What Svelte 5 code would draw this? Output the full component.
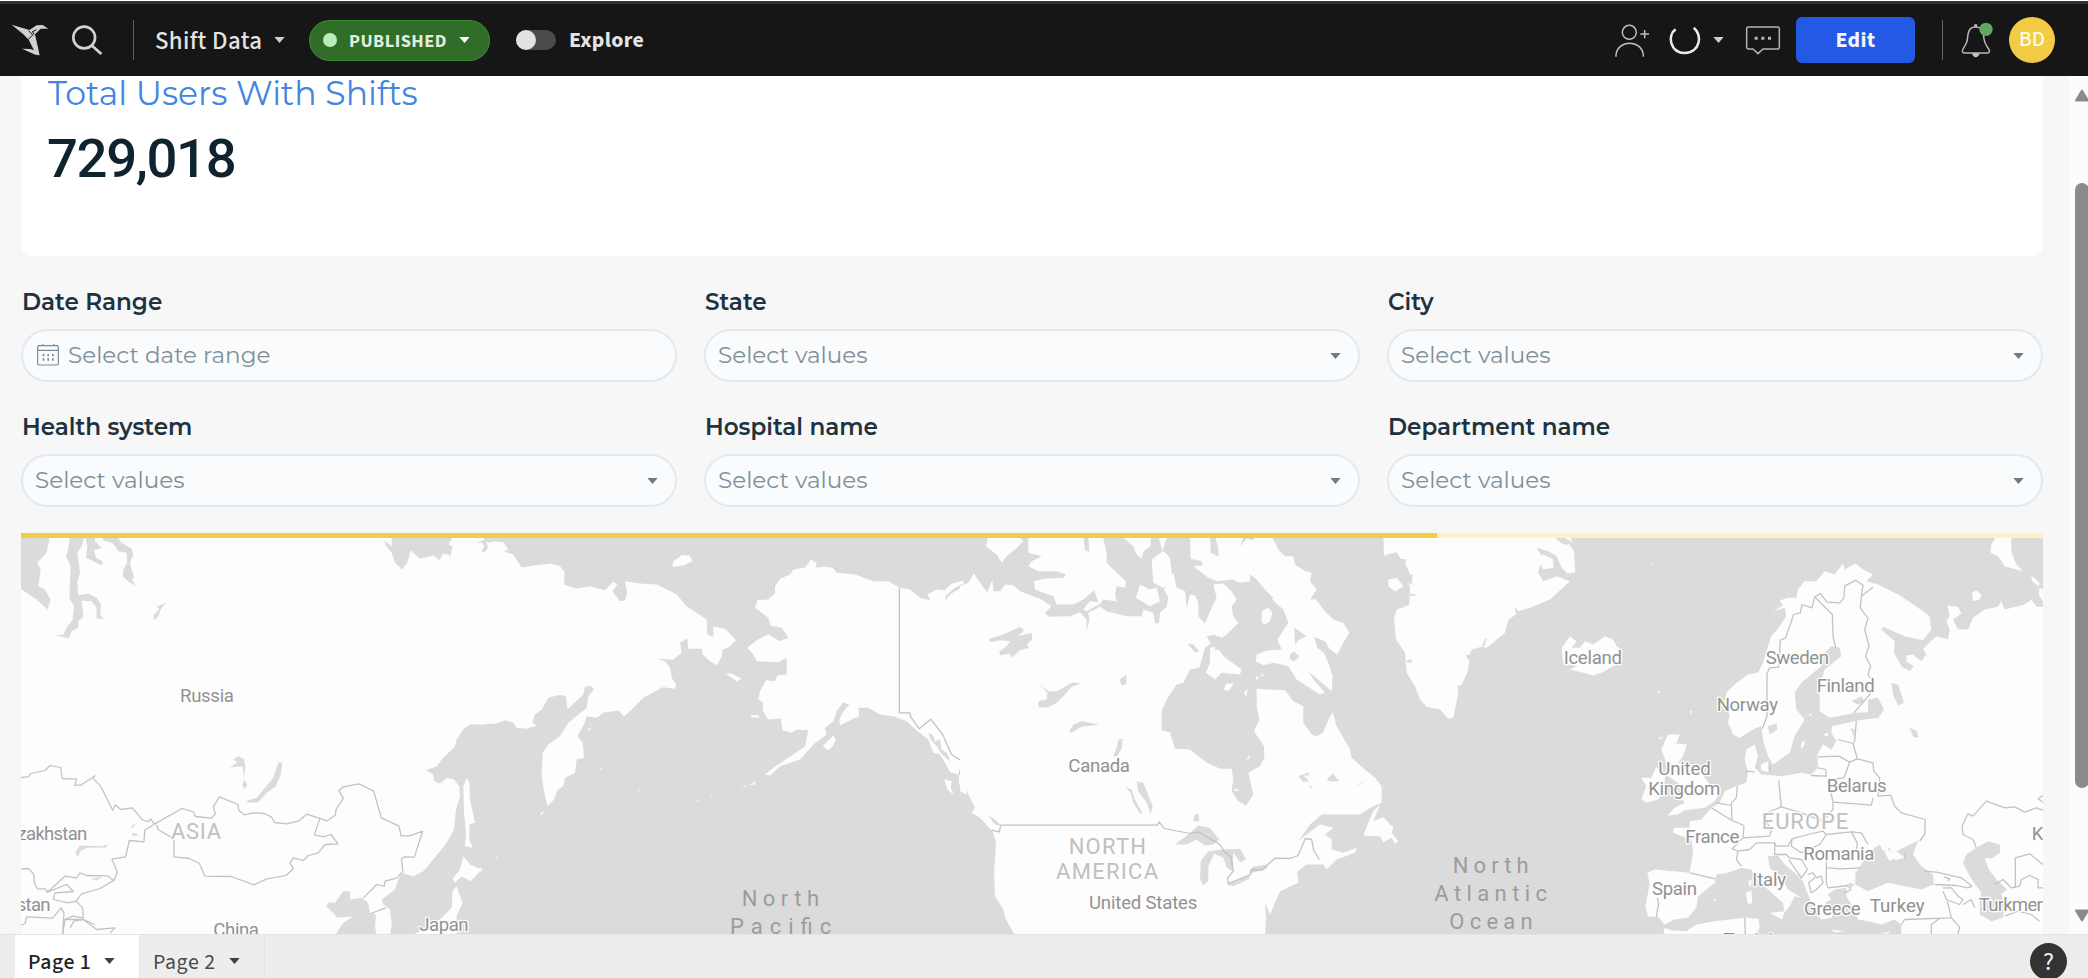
<script>
  const filters = [
    { label: 'Date Range', placeholder: 'Select date range', date: true },
    { label: 'State', placeholder: 'Select values' },
    { label: 'City', placeholder: 'Select values' },
    { label: 'Health system', placeholder: 'Select values' },
    { label: 'Hospital name', placeholder: 'Select values' },
    { label: 'Department name', placeholder: 'Select values' },
  ];

  // Each tile: x offset, then layers painted in order.
  const tiles = [
    {
      x: 0,
      land: ['62,50 1452,50 1452,1250 62,1250'],
      sea: [
        '62,50 150,50 140,100 112,130 122,150 115,200 135,210 152,240 142,270 110,240 62,208',
        '210,50 255,50 245,80 232,100 240,160 232,190 235,228 265,222 290,235 303,255 300,285 312,298 290,298 290,265 275,245 245,243 250,290 235,305 235,325 215,335 207,356 165,348 190,345 200,325 218,300 222,260 208,235 210,190 212,140 198,110 205,85',
        '255,50 285,50 285,65 305,85 282,92 288,115 308,125 305,138 280,125 258,115 262,80',
        '305,50 350,50 365,70 395,88 400,105 390,130 402,175 395,180 408,198 390,190 368,170 370,150 382,130 380,100 355,95 340,72 310,62',
        '498,250 470,262 478,270 462,285 460,303 475,290 482,270',
        '1150,62 1175,80 1175,50 1360,50 1345,75 1357,80 1352,108 1330,102 1318,122 1300,108 1260,118 1232,92 1222,130 1206,150 1185,130 1175,100 1160,82',
        '1432,68 1455,60 1465,80 1455,98 1443,95 1450,78',
        '1452,614 1410,615 1390,630 1370,660 1365,680 1330,715 1310,740 1277,752 1300,765 1302,785 1320,792 1340,775 1362,780 1378,800 1380,830 1368,870 1362,930 1340,970 1300,1020 1270,1055 1240,1070 1205,1060 1195,1080 1185,1110 1145,1140 1150,1155 1170,1170 1175,1210 1170,1250 1452,1250',
        '1003,1250 1030,1210 1060,1190 1010,1195 1000,1180 978,1160 985,1150 1005,1150 1030,1115 1050,1115 1050,1140 1085,1135 1105,1150 1110,1180 1128,1185 1125,1220 1130,1250',
        '835,730 847,730 842,765 828,800 800,820 775,848 742,850 742,843 770,835 795,805 820,775',
        '690,745 712,728 700,720 715,710 732,718 736,745 732,780 742,795 733,810 727,795 733,780 728,742 715,740',
        '225,1000 240,978 300,980 324,976 318,984 260,985 240,995 236,1012',
        '272,1078 308,1072 290,1083',
        '395,940 418,945 400,950', '392,922 413,908 396,926',
      ],
      over: [
        '1400,775 1408,790 1410,840 1425,910 1408,915 1408,960 1418,985 1395,980 1398,940 1392,880 1390,800',
        '1390,1010 1410,1035 1445,1050 1412,1085 1385,1070 1365,1090 1358,1078 1380,1050',
        '1370,1100 1388,1150 1370,1190 1370,1250 1230,1250 1260,1235 1290,1215 1320,1200 1355,1165 1358,1115',
      ],
      lines: [
        '62,774 85,772 92,762 135,753 150,738 182,744 187,777 230,779 224,797 242,797 285,769 278,776 302,800 338,872 346,856 362,870 397,865 428,902 445,906 452,898 463,914 546,867 580,877 587,891 634,896 646,883 640,862 658,832 714,855 716,872 733,886 760,880 793,882 815,893 823,909 858,913 895,905 920,884 982,904 1006,887 1008,870 1030,836 1017,814 1030,802 1077,793 1121,815 1144,895 1197,920 1203,949 1230,949 1268,935 1243,1013 1213,1012 1204,1020 1209,1055 1190,1076 1155,1085 1153,1100 1130,1095 1090,1135',
        '463,914 434,932 432,967 388,963 377,1012 336,1019 352,1058 342,1082 300,1107 245,1123 228,1145 248,1165 250,1195 218,1190 195,1200 188,1245',
        '470,915 474,930 522,958 522,1012 568,1017 598,1032 615,1070 693,1071 762,1096 800,1078 858,1068 880,1048 870,1030 880,1015 910,1023 925,1008 955,1000 975,975 1014,973 993,945 972,952 943,946 960,896',
        '62,1048 85,1047 101,1064 103,1090 112,1108 135,1108 142,1118 195,1070 230,1075 240,1060 260,1068 323,1069 340,1082',
        '142,1118 200,1095 220,1116 165,1120 160,1140 205,1150 228,1145', '62,1218 75,1212 80,1192 158,1196 183,1165 192,1180 188,1245',
        '195,1200 250,1200 290,1230 345,1225 330,1240', '210,1225 222,1205 250,1200 285,1215', '1112,1182 1158,1165',
      ],
    },
    {
      x: 1440,
      land: [
        '0,60 30,70 40,66 70,68 85,90 72,96 100,105 125,145 160,138 215,133 240,140 254,158 252,195 290,208 330,200 375,212 400,187 412,195 397,215 420,245 435,243 442,220 435,185 480,192 530,195 590,225 620,260 680,300 682,345 700,352 700,322 735,328 768,362 745,385 728,390 725,410 712,437 690,425 668,405 665,388 625,388 622,357 600,370 605,400 580,420 533,418 555,425 570,445 575,475 588,495 585,508 548,503 490,535 450,575 432,590 415,573 370,580 350,595 320,590 312,615 292,650 308,670 312,715 290,720 285,760 255,775 250,800 232,812 222,840 203,860 195,830 185,770 188,700 205,675 240,650 265,610 320,565 325,530 342,510 335,500 315,500 310,525 262,570 258,530 240,526 205,535 185,570 165,585 157,610 170,618 140,628 110,625 100,610 75,602 50,612 0,615',
        '577,142 580,125 605,107 628,108 638,125 610,138',
        '992,120 1010,130 1007,145 1035,142 1058,145 1070,160 1125,165 1180,185 1225,185 1260,205 1290,210 1320,235 1352,243 1342,225 1370,210 1395,212 1415,193 1450,183 1450,798 1437,795 1437,765 1410,758 1395,730 1380,705 1360,700 1345,660 1310,632 1280,605 1240,590 1200,585 1165,565 1135,565 1138,590 1115,600 1080,617 1078,600 1090,575 1108,555 1090,548 1070,575 1060,605 1035,625 1040,645 1000,675 960,720 900,740 870,768 855,765 880,745 940,705 975,680 985,632 950,630 935,640 908,633 902,597 865,600 848,572 850,550 835,540 840,515 858,482 885,485 892,468 920,465 920,415 895,428 830,425 820,405 802,385 830,362 865,345 900,365 925,355 905,325 872,318 865,295 825,265 832,242 865,240 885,222 885,200 900,178 930,165 940,150 975,145',
        '1028,680 1060,648 1068,660 1058,680 1045,692', '735,463 755,463 785,478 770,486 755,473', '812,586 838,588 835,595 815,593',
        '785,805 795,797 800,800', '808,797 828,784 825,795', '178,885 192,873 188,884', '320,632 335,624 330,632', '1393,780 1415,785 1412,805 1422,827 1402,810',
        '0,1040 6,1050 2,1062', '650,845 656,838 656,846', '690,830 696,830 694,834', '360,745 365,745 363,755', '474,812 480,812 478,816', '48,1012 53,1012 51,1018',
      ],
      sea: ['1395,230 1425,205 1455,190 1450,200 1410,225 1398,242', '0,65 18,62 24,85 12,98 4,95 14,80', '1345,640 1358,645 1365,665 1380,660 1385,690 1400,700 1412,725 1400,718 1382,700 1370,680 1352,660'],
      over: [],
      lines: ['1258,205 1258,580 1290,580 1292,592 1318,628 1352,599 1388,645 1414,704 1446,725 1438,765'],
    },
    {
      x: 2880,
      land: [
        '0,200 25,190 42,162 60,190 82,218 97,180 100,215 120,215 135,195 160,198 180,215 240,238 275,260 255,280 265,292 330,290 360,278 380,300 380,335 388,300 385,280 420,262 440,275 500,290 545,290 550,270 580,280 585,312 597,310 600,280 620,262 625,235 612,210 640,160 650,205 675,215 680,265 690,225 705,228 715,250 715,290 735,312 750,275 770,235 760,195 790,192 815,215 830,240 815,262 820,290 835,310 800,345 775,362 765,345 740,350 752,372 735,385 718,445 690,450 670,490 650,495 620,540 605,575 605,632 630,638 645,688 690,690 740,730 780,748 815,748 820,780 815,815 835,845 858,858 880,825 872,790 865,760 900,740 913,715 912,680 882,635 898,600 890,560 890,508 920,510 975,512 1000,545 1030,560 1030,610 1055,645 1070,650 1090,638 1108,595 1118,578 1130,620 1150,655 1170,690 1175,715 1215,750 1245,775 1265,800 1265,850 1230,865 1200,885 1085,885 1050,915 1015,965 1040,945 1080,915 1120,925 1095,945 1115,960 1115,990 1150,1000 1190,985 1185,1000 1130,1020 1100,1050 1090,1035 1040,1035 1012,1055 1015,1090 960,1115 945,1150 930,1185 915,1150 918,1200 915,1250 167,1250 135,1195 130,1170 105,1130 102,1060 105,1020 108,965 97,935 60,895 35,880 45,865 25,825 18,803 0,800',
        '205,50 370,50 375,92 388,97 385,50 428,50 440,100 440,130 470,160 498,185 495,205 470,200 465,225 470,245 430,240 418,255 402,212 370,240 340,255 290,255 280,230 225,210 222,185 250,178 310,175 318,165 290,155 235,155 205,140 215,125 245,110 205,100',
        '85,50 175,50 190,65 165,90 140,110 125,130 110,105 78,80', '485,50 572,50 572,80 550,95 545,117 530,105 520,80',
        '575,120 608,95 595,50 622,50 608,92 630,115 635,160 645,190 610,205 580,190', '540,195 570,210 590,205 600,245 570,260 545,245 528,235', '370,270 390,245 425,250 380,275',
        '690,50 750,50 752,100 775,112 775,85 765,50 935,50 955,90 975,110 1000,110 1005,135 1035,155 1055,160 1050,185 1070,210 1050,240 1068,240 1090,270 1120,300 1150,310 1168,340 1150,370 1132,405 1110,390 1095,365 1062,352 1072,385 1092,400 1105,430 1118,470 1115,515 1045,455 1060,480 1095,520 1080,525 1010,480 985,440 940,430 910,437 888,425 890,405 920,393 965,390 952,360 985,310 970,270 930,235 910,205 890,180 870,165 870,185 840,190 815,180 770,185 745,175 700,140 728,138 725,125 692,118',
        '750,385 770,380 790,410 845,450 840,465 785,460 765,480 738,460 750,430', '790,510 800,492 822,492 805,515', '852,520 862,508 860,533',
        '1260,855 1240,905 1270,893 1300,925 1295,940 1315,965 1305,972 1295,955 1270,968 1260,950 1210,948 1225,910 1240,875',
        '0,795 20,805 20,825 0,815',
      ],
      sea: [
        '88,358 130,345 180,322 192,332 175,350 215,340 217,360 200,375 208,385 180,392 155,415 150,402 120,408 118,397 140,380 150,365 120,362 90,368',
        '240,495 265,515 290,515 340,488 362,493 335,502 315,525 290,550 265,563 235,563 235,545 260,540 262,520', '328,635 340,615 365,605 418,616 365,622 335,640',
        '478,480 500,465 498,495 485,497', '460,710 470,685 475,660 488,658 485,685 472,710', '530,785 550,790 578,860 572,883 560,850 535,815',
        '497,803 515,810 525,840 548,882 540,883 520,850 512,820', '700,905 703,887 715,883 718,905', '645,975 685,945 715,918 750,925 778,960 760,975 735,978 710,960 680,975',
        '720,1080 722,1025 745,995 785,990 840,988 858,1020 840,1028 820,1000 818,1055 800,1045 790,1015 762,1003 745,1040 745,1085 730,1097', '800,1095 870,1065 868,1078 820,1100', '868,1055 880,1042 920,1035 920,1048 870,1062',
        '1015,770 1045,758 1048,768 1030,768 1048,785 1030,787', '1100,780 1118,762 1138,785 1110,785', '1193,797 1215,783 1200,796', '1048,795 1057,803 1052,808', '683,373 700,375 718,397 705,399',
        '1003,325 1040,350 1018,360 1005,375', '990,405 1002,395 1018,410 1002,425 990,420', '765,350 780,350 790,375 795,395 765,390', '1140,890 1162,908 1135,905', '840,80 850,55 885,55 880,62 860,58', '868,165 940,235 930,245 890,215', '85,888 105,900 125,920 105,915',
      ],
      over: ['905,310 905,275 925,265 937,280 930,305 915,315', '888,472 895,470 894,480 888,480', '900,465 912,465 905,472', '858,722 870,705 868,718', '822,806 840,812 825,815'],
      lines: ['94,932 118,937 122,917 592,917 598,907 612,927 690,942 715,937 780,975 792,995 813,1012 820,1055 803,1075 805,1092 872,1065 875,1050 905,1052 945,1016 990,1017 1014,1008 1036,957 1055,960 1061,993 1078,1020'],
    },
    {
      x: 4140,
      land: [
        '10,50 520,50 545,72 570,78 578,92 585,158 562,162 545,145 530,110 505,95 470,85 490,105 520,120 520,145 490,150 480,135 474,160 490,185 530,170 570,185 510,240 450,265 415,275 403,260 408,285 385,300 375,340 320,385 312,385 310,380 275,390 270,405 256,408 268,425 262,460 245,495 232,500 235,520 220,595 205,598 180,570 140,562 120,540 105,500 80,460 75,400 48,360 42,300 50,270 75,262 88,255 90,200 75,180 90,165 75,130 45,110 12,108',
        '25,180 50,175 70,200 45,217 25,200', '545,385 570,350 590,365 575,385 600,385 615,365 640,375 675,350 700,360 710,380 728,395 720,430 690,445 675,455 640,468 610,460 570,450 590,440 550,432', '810,138 820,130 815,138', '832,515 840,513 838,522',
      ],
      sea: ['20,105 50,98 62,118 80,120 72,138 45,122 20,125', '35,145 60,148 80,165 98,165 95,195 82,190 60,168 38,165', '90,222 115,226 90,230', '80,422 95,420 95,430 80,430', '470,85 485,90 492,108 482,105', '315,358 320,358 312,382 306,380', '520,50 545,50 575,72 560,70'],
      over: ['548,50 570,50 578,70'],
      lines: [],
    },
    {
      x: 4704,
      land: [
        '515,655 495,645 480,610 485,585 470,555 475,520 500,495 540,465 570,460 585,430 600,380 610,350 635,320 655,290 650,265 615,275 645,258 635,243 660,235 685,235 690,210 710,185 745,185 770,155 800,165 825,132 830,150 862,132 885,150 915,165 895,185 930,195 1000,230 1050,265 1085,290 1090,330 1065,362 1010,350 945,322 940,330 980,365 978,400 1000,440 1025,455 1037,440 1015,425 1015,408 1035,405 1060,425 1075,405 1065,388 1105,350 1140,360 1145,330 1135,305 1145,290 1138,258 1170,262 1180,283 1155,300 1170,330 1200,330 1215,295 1250,270 1290,262 1300,245 1310,270 1370,255 1390,240 1405,262 1425,262 1425,1250 1000,1250 1000,1215 980,1200 940,1215 900,1205 870,1200 860,1170 835,1130 835,1105 800,1110 778,1125 790,1140 770,1150 800,1170 790,1195 760,1200 740,1175 722,1130 705,1085 680,1060 650,1035 630,1008 600,1010 605,1045 640,1075 660,1110 700,1135 680,1130 665,1160 650,1180 645,1150 600,1110 570,1085 550,1050 520,1045 480,1060 445,1065 440,1090 390,1130 385,1165 360,1195 320,1200 290,1215 270,1192 240,1192 232,1160 245,1095 238,1060 260,1050 365,1060 375,1000 370,960 315,940 318,925 365,925 365,905 400,900 430,865 455,850 470,815 505,800 535,790 540,760 530,720 535,690 560,675 570,710 560,745 580,765 640,770 700,760 730,765 750,745 748,705 765,675 790,690 805,665 790,640 792,620 860,605 890,600 930,595 900,578 865,580 785,595 755,575 755,500 770,450 820,410 815,385 790,380 770,400 760,440 700,490 680,520 685,570 710,600 680,650 665,700 615,735 600,710 585,660 580,620 565,625',
        '700,668 712,662 708,680 698,688', '578,735 600,725 602,758 580,752', '300,645 335,645 325,672 357,675 345,710 330,730 395,745 410,775 430,800 460,810 440,845 410,865 350,872 330,885 298,888 320,865 350,850 330,825 345,800 300,770 290,715 280,690',
        '220,775 250,775 265,742 292,770 285,820 270,840 235,850 220,840 235,800', '285,1250 290,1225 310,1232 355,1235 385,1215 440,1205 530,1195 572,1198 575,1225 560,1250', '605,1180 650,1175 642,1200', '533,1120 550,1112 553,1150 540,1155', '540,1085 552,1080 548,1105', '790,1230 830,1236 800,1238', '935,1243 970,1235 960,1243',
        '1285,50 1330,50 1330,95 1345,135 1365,155 1310,140 1290,110 1268,100 1270,75', '1212,220 1225,212 1240,225 1235,240 1215,245', '1390,168 1415,190 1412,200 1392,185', '1415,205 1425,210 1425,245 1412,225', '764,645 782,640 778,650', '365,575 372,573 368,585', '272,655 285,650 275,662', '0,70 18,95 22,158 0,160', '436,1140 446,1138 440,1145', '722,585 732,583 728,590',
      ],
      sea: [
        '862,1060 880,1035 900,1000 935,975 945,995 965,985 980,1022 1010,1015 985,995 1050,963 1035,1005 1060,1040 1095,1065 1098,1095 1060,1110 960,1090 900,1115 862,1095',
        '1225,985 1260,965 1295,975 1297,1000 1270,1018 1250,1015 1262,1050 1290,1085 1318,1110 1300,1122 1310,1165 1305,1195 1270,1205 1235,1185 1235,1150 1240,1120 1205,1070 1185,1030 1195,1005',
        '900,540 930,535 948,570 930,597 900,590', '600,620 625,612 628,630 605,645', '970,490 990,495 1008,550 990,558 975,525', '1025,625 1048,635 1050,655 1035,652', '850,545 880,530 890,545 870,555', '848,625 860,630 858,655', '835,1100 845,1090 860,1095 845,1110',
      ],
      over: ['955,985 985,1010 965,1025 950,1000'],
      lines: [
        '583,628 597,590 597,462 605,445 632,443 637,362 653,355 677,285 697,280 702,255 732,265 740,232 757,222 777,248 815,250 828,235 830,200 863,182 885,197 880,230 915,203', '740,232 793,285 795,350 803,385', '880,230 877,265 900,297 890,330 903,378 893,410 908,440 900,465 918,490 905,525 858,580',
        '865,605 860,665 855,672 810,660', '855,672 868,718 845,728 812,710 750,712', '868,718 915,730 917,755 935,775 930,830 968,827 980,860 1000,880 1072,900 1070,945 1055,965', '845,728 828,775 780,780 795,848 910,857 915,835', '728,768 775,770 773,750 750,745', '632,782 640,862 585,885 610,935 605,950 525,955', '605,737 605,755', '532,755 560,757', '508,800 505,835 490,850 492,900', '445,850 490,858', '430,865 492,903 528,918 525,955 492,988 510,995 505,1020 520,1040', '640,862 700,880 765,905 795,870 795,848', '510,995 545,990 565,970 620,970 625,980 660,980 672,958 720,945 765,935 775,945 850,937 880,940 900,975', '672,958 670,980 700,1000 710,995 755,975 775,945', '620,970 620,1005 655,1005 665,1015 700,1020 718,1050 700,1075 662,1020', '850,937 868,970 866,990', '775,1020 775,1045 820,1048 875,1045', '775,1045 775,1090 780,1105 840,1098', '720,1065 735,1060 745,1075 760,1070 765,1090 745,1110 730,1120 722,1090 740,1075', '365,1060 442,1078', '268,1135 272,1150 265,1192', '530,1195 532,1245', '1068,1055 1105,1058 1180,1075 1212,1100 1200,1105 1165,1098 1100,1095', '1128,1072 1145,1078 1140,1085', '1125,1105 1150,1105 1170,1130 1185,1140 1175,1155 1135,1140 1125,1115', '1138,1145 1150,1195 1010,1200 1000,1215', '1150,1195 1175,1222 1170,1245', '1090,1245 1090,1215 1115,1197', '1185,1155 1210,1140 1220,1165', '1225,985 1215,960 1185,945 1182,920 1200,883 1215,890 1255,845 1310,865 1340,862 1370,878 1405,865 1425,872', '1342,1105 1342,1015 1385,1003 1425,1035', '1280,1095 1305,1080 1330,1105 1355,1100 1360,1080 1385,1068 1410,1080 1410,1105 1425,1105', '1310,1190 1350,1175 1390,1185 1415,1205', '1425,828 1410,838 1425,848', '1012,1000 1012,1020', '850,1110 830,1120',
      ],
    },
  ];

  const labels = [
    ['Russia', 540, 547, 162], ['China', 640, 1250, 137], ['Japan', 1258, 1233, 148],
    ['ASIA', 513, 959, 150, 'region'], ['North', 2225, 1158, 232, 'ocean'], ['Pacific', 2190, 1242, 304, 'ocean'],
    ['Canada', 3205, 758, 185], ['NORTH', 3206, 1004, 232, 'region'], ['AMERICA', 3168, 1079, 306, 'region'],
    ['United States', 3267, 1169, 325], ['North', 4358, 1061, 228, 'ocean'], ['Atlantic', 4303, 1145, 338, 'ocean'],
    ['Ocean', 4348, 1229, 250, 'ocean'], ['Iceland', 4691, 432, 175], ['Sweden', 5297, 433, 190],
    ['Finland', 5450, 517, 174], ['Norway', 5150, 573, 184], ['United', 4975, 767, 157], ['Kingdom', 4945, 827, 216],
    ['Belarus', 5480, 817, 180], ['EUROPE', 5285, 929, 260, 'region'], ['France', 5056, 970, 162],
    ['Romania', 5410, 1020, 213], ['Italy', 5257, 1098, 101], ['Spain', 4956, 1127, 135],
    ['Greece', 5412, 1187, 170], ['Turkey', 5609, 1176, 165],
    ['Kazakhstan', -8, 962, 270], ['Uzbekistan', -104, 1175, 256],
    ['Kazakhstan', 6095, 962, 270], ['Turkmenistan', 5936, 1175, 315], ['Tunisia', 5170, 1279, 180],
  ];
</script>

<div class="app">
  <header>
    <svg class="logo" viewBox="30 66 120 108"><path d="M35 74L88 90 110 76 128 75 145 86 122 86 105 103 119 166 106 164 66 146 91 147 102 151 86 119 70 103Z" /><path d="M86 92L98 105 84 119M96 96L109 89M103 104L98 96" class="fold" /></svg>
    <svg class="search" viewBox="210 70 100 100"><circle cx="250" cy="111" r="33" /><path d="M273 135L302 161" /></svg>
    <i class="rule"></i>
    <span class="title">Shift Data</span>
    <svg class="caret" viewBox="0 0 12 7"><path d="M0 0H12L6 7Z" /></svg>
    <div class="status"><i></i><span>PUBLISHED</span><svg class="caret" viewBox="0 0 12 7"><path d="M0 0H12L6 7Z" /></svg></div>
    <div class="toggle"><i></i></div>
    <span class="explore">Explore</span>
    <div class="actions">
      <svg class="invite" viewBox="100 70 108 105"><circle cx="146" cy="98" r="21" /><path d="M106 171V166C111 119 183 119 188 166V171M179 103H205M192 91V116" /></svg>
      <svg class="spin" viewBox="262 78 102 90"><path d="M285 91C259 107 267 161 313 162C358 161 367 107 339 86" /></svg>
      <svg class="caret more" viewBox="0 0 12 7"><path d="M0 0H12L6 7Z" /></svg>
      <svg class="chat" viewBox="496 75 108 93"><path d="M506 81H594Q599 81 599 86V142Q599 147 594 147H550L535 161 520 147H506Q501 147 501 142V86Q501 81 506 81Z" /><path class="dots" d="M525 110h9v9h-9zM545 110h9v9h-9zM565 110h9v9h-9z" /></svg>
      <button>Edit</button>
      <i class="rule"></i>
      <svg class="bell" viewBox="1140 62 102 114"><path d="M1187 80C1166 80 1164 96 1162 118C1160 136 1146 144 1147 153Q1148 158 1154 158H1222Q1229 158 1228 150C1225 142 1214 134 1212 116C1210 96 1208 80 1187 80Z" /><path class="solid" d="M1183 79V72H1191V79ZM1176 159H1199Q1196 170 1187 171Q1179 170 1176 159Z" /><circle cx="1218" cy="87" r="20" /></svg>
      <div class="avatar">BD</div>
    </div>
  </header>

  <div class="body">
    <main>
      <section class="card">
        <h2>Total Users With Shifts</h2>
        <strong>729,018</strong>
      </section>

      <section class="filters">
        {#each filters as f}
          <div class="filter">
            <label for={f.label}>{f.label}</label>
            <div class="field" id={f.label}>
              {#if f.date}
                <svg class="cal" viewBox="0 0 66 66"><path d="M6 5H60Q64 5 64 10V58Q64 63 60 63H6Q2 63 2 58V10Q2 5 6 5ZM2 19H64M17 0V7M50 0V7" /><path class="dots" d="M17 30h5v7h-5zM31 30h5v7h-5zM45 30h5v7h-5zM17 43h5v7h-5zM31 43h5v7h-5zM45 43h5v7h-5z" /></svg>
              {/if}
              <span>{f.placeholder}</span>
              {#if !f.date}<svg class="caret" viewBox="0 0 12 7"><path d="M0 0H12L6 7Z" /></svg>{/if}
            </div>
          </div>
        {/each}
      </section>

      <div class="progress"><i></i></div>

      <svg class="map" viewBox="63 55.5 6066 1188" preserveAspectRatio="none">
        {#each tiles as t}
          <g transform="translate({t.x} 0)">
            {#each t.land as p}<polygon class="land" points={p} />{/each}
            {#each t.sea as p}<polygon class="sea" points={p} />{/each}
            {#each t.over as p}<polygon class="land" points={p} />{/each}
            {#each t.lines as p}<polyline points={p} />{/each}
          </g>
        {/each}
        {#each labels as [text, x, y, len, kind]}
          <text {x} {y} textLength={len} class={kind}>{text}</text>
        {/each}
      </svg>
    </main>
    <div class="scroll">
      <svg viewBox="0 0 14 12"><path d="M7 1L13 11H1Z" /></svg>
      <i></i>
      <svg class="down" viewBox="0 0 14 12"><path d="M7 11L13 1H1Z" /></svg>
    </div>
  </div>

  <footer>
    <div class="tab active"><span>Page 1</span><svg class="caret" viewBox="0 0 12 7"><path d="M0 0H12L6 7Z" /></svg></div>
    <div class="tab"><span>Page 2</span><svg class="caret" viewBox="0 0 12 7"><path d="M0 0H12L6 7Z" /></svg></div>
    <div class="help">?</div>
  </footer>
</div>

<style>
  :global(body) { margin: 0; }
  .app { width: 2088px; height: 978px; display: flex; flex-direction: column; overflow: hidden; background: #f7f7f7; font-family: "Source Sans 3", "Noto Sans CJK SC", sans-serif; }
  svg { display: block; flex: none; fill: none; }
  .caret { width: 11px; height: 6px; fill: currentColor; }
  header { height: 76px; flex: none; box-sizing: border-box; border-top: 1px solid #fff; box-shadow: inset 0 3px #303331; background: #161616; display: flex; align-items: center; padding: 3px 33px 0 10px; color: #e4e4e4; white-space: nowrap; }
  .logo { width: 40px; height: 36px; fill: #d0d0d0; }
  .fold { stroke: #161616; stroke-width: 3; fill: none; }
  .search { width: 33px; height: 33px; margin-left: 21px; stroke: #d2d2d2; stroke-width: 8; }
  .rule { width: 1px; height: 40px; background: #606060; }
  header > .rule { margin-left: 29px; }
  .title { font-size: 25px; line-height: 38px; padding-top: 2px; margin-left: 21px; width: 107px; font-weight: 500; letter-spacing: 0.35px; }
  .title + .caret { margin-left: 12px; color: #cfcfcf; }
  .status { margin-left: 24px; width: 181px; height: 41px; box-sizing: border-box; border: 1px solid #3c8a37; border-radius: 21px; background: #306d29; display: flex; align-items: center; padding-left: 13px; font-size: 18.4px; font-weight: 700; letter-spacing: 0.45px; color: #e0eede; }
  .status i { width: 14px; height: 14px; border-radius: 50%; background: #b8edbb; margin-right: 12px; }
  .status span { width: 98px; padding-top: 1px; }
  .status .caret { margin-left: 12px; color: #fff; }
  .toggle { width: 40px; height: 20px; border-radius: 10px; background: #4b4b4b; margin-left: 26px; }
  .toggle i { display: block; width: 20px; height: 20px; border-radius: 50%; background: #e2e2e2; }
  .explore { font-size: 21.9px; font-weight: 700; margin-left: 13px; padding-top: 1px; letter-spacing: 0.3px; }
  .actions { margin-left: auto; display: flex; align-items: center; }
  .invite { width: 36px; height: 35px; stroke: #bdbdbd; stroke-width: 4.5; }
  .spin { width: 34px; height: 30px; margin-left: 18px; stroke: #ececec; stroke-width: 7.5; }
  .more { margin-left: 11px; color: #cfcfcf; }
  .chat { width: 36px; height: 31px; margin-left: 21px; stroke: #b4b4b4; stroke-width: 4.5; }
  .chat .dots { fill: #b4b4b4; stroke: none; }
  button { width: 119px; height: 46px; margin-left: 15px; padding: 0; border: 0; border-radius: 6px; background: #2459e5; color: #f2f5fd; font: 700 21.9px "Source Sans 3", "Noto Sans CJK SC", sans-serif; letter-spacing: 0.3px; }
  .actions .rule { margin-left: 27px; background: #666; }
  .bell { width: 34px; height: 38px; margin-left: 17px; stroke: #b8b8b8; stroke-width: 4.5; }
  .bell .solid { fill: #c4c4c4; stroke: none; }
  .bell circle { fill: #60a760; stroke: none; }
  .avatar { width: 46px; height: 46px; line-height: 46px; margin-left: 15px; border-radius: 50%; background: #f4cb45; color: #fffbe9; text-align: center; font-size: 21.5px; font-weight: 500; }

  .body { flex: 1; min-height: 0; display: flex; }
  main { width: 2022px; padding: 0 26px 0 21px; flex: none; font-family: Montserrat, Inter, sans-serif; }
  .card { height: 180px; box-sizing: border-box; padding: 0 27px; background: #fff; border-radius: 0 0 11px 11px; overflow: hidden; }
  h2 { margin: 0; font-size: 33.1px; line-height: 34px; font-weight: 400; color: #4285e2; white-space: nowrap; }
  .card strong { display: block; margin: 16px 0 0 -1px; font: 500 54.5px/64px Roboto, sans-serif; letter-spacing: -1.4px; color: #10242f; }
  .filters { display: grid; grid-template-columns: repeat(3, 656px); column-gap: 27px; row-gap: 27px; padding-top: 28px; height: 249px; box-sizing: border-box; }
  .filter { height: 98px; }
  label { display: block; height: 45px; line-height: 37px; padding-left: 1px; font-size: 23.1px; font-weight: 600; color: #1d333f; }
  .field { height: 53px; box-sizing: border-box; border: 2px solid #e0eaf3; border-radius: 27px; background: #fafbfd; display: flex; align-items: center; padding: 0 17px 0 12px; color: #80909a; font-size: 23.1px; font-weight: 400; }
  .field span { padding-bottom: 2px; }
  .field .caret { margin-left: auto; color: #6b7c85; }
  .cal { width: 22px; height: 22px; margin: 0 9px 2px 2px; stroke: #7a8b95; stroke-width: 3.5; }
  .cal .dots { fill: #7a8b95; stroke: none; }
  .progress { height: 5px; margin-top: 28px; background: #fdf3c6; }
  .progress i { display: block; width: 1416px; height: 100%; background: #f4cb45; }
  .map { width: 2022px; height: 396px; background: #dbdbdb; overflow: hidden; font-family: Roboto, sans-serif; }
  .land { fill: #fdfdfd; }
  .sea { fill: #dbdbdb; }
  polyline { stroke: #c2c2c2; stroke-width: 3.8; stroke-linejoin: round; }
  text { font-size: 56px; fill: #929292; stroke: #fdfdfd; stroke-width: 8; paint-order: stroke; stroke-linejoin: round; }
  .region { font-size: 66px; fill: #c0c0c0; }
  .ocean { font-size: 66px; fill: #9c9c9c; stroke: none; }

  .scroll { width: 19px; background: #fcfcfc; display: flex; flex-direction: column; align-items: center; padding-left: 6px; box-sizing: border-box; }
  .scroll svg { width: 14px; height: 13px; margin-top: 13px; fill: #8b8b8b; stroke: #8b8b8b; stroke-width: 2; stroke-linejoin: round; }
  .scroll i { width: 14px; height: 605px; margin-top: 81px; border-radius: 7px; background: #8b8b8b; flex: none; }
  .scroll .down { margin-top: 121px; }

  footer { height: 44px; flex: none; box-sizing: border-box; border-top: 1px solid #e4e4e4; background: #ededed; display: flex; padding: 0 21px 0 15px; z-index: 1; }
  .tab { width: 125px; box-sizing: border-box; border-right: 1px solid #e4e4e4; padding: 11px 0 0 13px; display: flex; align-items: center; font-size: 21.8px; line-height: 30px; letter-spacing: 0.6px; color: #4a4a4a; }
  .tab span { width: 76px; padding-top: 1px; }
  .tab .caret { margin-bottom: 2px; color: #404040; }
  .tab.active { background: #fff; color: #222; font-weight: 500; }
  .help { width: 37px; height: 37px; margin: 8px 0 0 auto; border-radius: 50%; background: #333; color: #f2f2f2; text-align: center; line-height: 37px; font-size: 26px; }
</style>
